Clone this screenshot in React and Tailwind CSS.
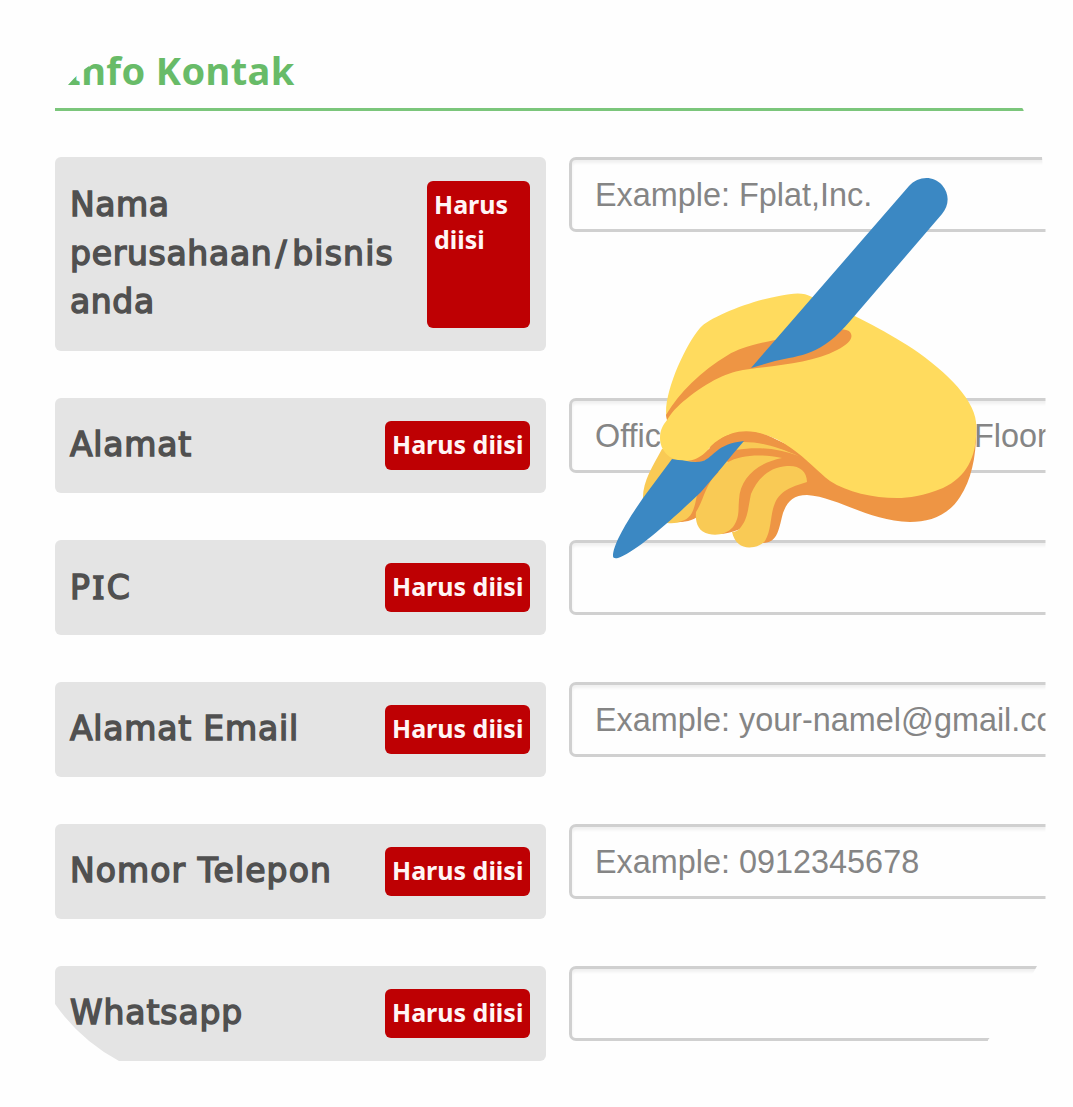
const rows = [
  {
    label: (
      <>
        Nama <span className="tracking-[0.7px]">perusahaan</span>
        <span className="ml-[3px] mr-[5px]">/</span>
        <span className="tracking-[1.2px]">bisnis</span> anda
      </>
    ),
    placeholder: "Example: Fplat,Inc.",
    tall: true,
  },
  {
    label: <span className="tracking-[0.8px]">Alamat</span>,
    placeholder: (
      <>
        Office<span className="ml-[295px]">Floor</span>
      </>
    ),
  },
  {
    label: (
      <>
        P<span className="mx-[2px] font-['Noto_Sans',sans-serif] font-medium">I</span>C
      </>
    ),
    placeholder: "",
  },
  {
    label: <span className="tracking-[0.8px]">Alamat Email</span>,
    placeholder: "Example: your-namel@gmail.com",
  },
  {
    label: <span className="tracking-[1.1px]">Nomor Telepon</span>,
    placeholder: "Example: 0912345678",
  },
  { label: <span className="tracking-[0.9px]">Whatsapp</span>, placeholder: "" },
];

function Row({ label, placeholder, tall }) {
  return (
    <div className="flex items-start gap-[23px]">
      <div
        className={`flex w-[491px] shrink-0 justify-between rounded-[6px] bg-[#e4e4e4] pr-4 pl-[15px] ${
          tall ? "h-[194px] pt-6 pb-[23px]" : "h-[95px] py-[23px]"
        }`}
      >
        <div className="w-[330px] shrink-0 font-['DejaVu_Sans',sans-serif] text-[33px] leading-[48.6px] tracking-[0.6px] text-[#505050] [-webkit-text-stroke:1.5px_#505050]">
          {label}
        </div>
        <div
          className={`shrink-0 rounded-[6px] bg-[#be0003] pl-[7px] text-[25px] font-bold text-[#fff5f5] ${
            tall ? "w-[103px] pt-[6px] leading-[35px]" : "-ml-20 w-[145px] leading-[47px] whitespace-nowrap"
          }`}
        >
          Harus diisi
        </div>
      </div>
      <div className="h-[75px] w-[520px] shrink-0 overflow-hidden rounded-[7px] border-[3px] border-[#d0d0d0] pl-[23px] font-['Liberation_Sans',sans-serif] text-[32.4px] leading-[70px] whitespace-nowrap text-[#858585] shadow-[inset_0_3px_3px_rgba(0,0,0,0.06)]">
        {placeholder}
      </div>
    </div>
  );
}

function WritingHand() {
  return (
    <svg className="absolute top-[170px] left-[600px] h-[400px] w-[390px]" viewBox="600 170 390 400">
      <path fill="#f9ca55" d="M662 449C653 466 642 482 643 500L667 523C676 524 686 522 697 514L735 450Z" />
      <path fill="#ee9544" d="M678 522C692 520 694 510 697 495L714 470L724 474C714 487 712 505 703 512C695 520 688 522 678 522Z" />
      <path fill="#ee9544" d="M700 440L745 426L800 450L976 425C977 453 972 479 960 497C948 516 929 522 910 522C868 521 838 497 807 495C793 495 787 502 783 513C779 528 778 543 763 543L755 526C742 526 734 534 718 534L708 495L728 462Z" />
      <path fill="#f9ca55" d="M728 462C739 456 759 453 782 458C757 463 740 478 739 500C738 510 740 517 733 527C727 534 717 536 709 534C698 532 695 522 696 512C702 503 705 489 712 479Z" />
      <path fill="#f9ca55" d="M787 466C767 467 756 482 751 494C748 508 748 518 741 527C738 531 735 532 732 532C735 545 744 549 754 547C759 546 762 544 765 541C772 529 770 514 775 503C781 489 795 486 807 482C807 471 799 465 787 466Z" />
      <path fill="#f9ca55" d="M742 441C764 440 780 448 799 456C779 449 759 446 736 450Z" />
      <path fill="#ffdb5e" d="M667 420C661 398 685 345 700 328C710 317 750 301 779 296C794 293 803 292 812 297C843 309 878 327 907 345C940 366 974 397 976 422C978 453 969 476 943 488C923 496 909 498 897 498C873 498 847 492 830 481C818 472 807 459 791 448C763 427 730 427 711 446C705 453 700 463 685 461C669 461 660 450 660 438C660 430 663 425 667 420Z" />
      <path fill="#ee9544" d="M685 461C704 460 707 448 718 441C743 422 773 433 800 456C776 447 763 442 743 442C715 442 713 463 697 462Z" />
      <path fill="#ee9544" d="M667 420C673 410 681 403 690 396C714 378 731 371 750 369C782 365 814 362 837 350C850 343 854 337 850 332C844 325 820 332 775 340C750 345 738 349 728 355C701 371 679 393 666 415Z" />
      <path fill="#3b88c3" d="M751 368L909 186C918 176 933 175 942 185C950 194 949 206 942 214L851 320C821 356 801 355 775 361Z" />
      <path fill="#3b88c3" d="M744 441C716 444 714 457 703 461C694 464 686 460 678 460L672 459L643 498C629 518 613 544 613 556Q613 559 618 558C635 553 675 517 701 492C716 475 730 457 744 441Z" />
    </svg>
  );
}

export default function App() {
  return (
    <div className="relative h-[1107px] w-[1073px] overflow-hidden bg-[#fefefe] font-['Noto_Sans',sans-serif]">
      <main className="h-[1107px] w-[1073px] overflow-hidden pl-[55px] [clip-path:path('M0_130L55_100L68_85Q78_73_92_64L97_0L1000_0L1000_80L1023_109L1042_157L1045.5_200L1045.5_930L1037_966Q1015_1008_988_1040L980_1107L200_1107L119_1061Q80_1040_55_1004L0_1004Z')]">
        <h1 className="h-[111px] w-[990px] border-b-[3px] border-[#7bc67b] pt-[44px] pl-[11px] text-[38px] leading-[52px] font-bold tracking-[0.4px] text-[#68bb68]">
          Info Kontak
        </h1>
        <div className="flex flex-col gap-[47px] pt-[46px]">
          {rows.map((row, i) => (
            <Row key={i} {...row} />
          ))}
        </div>
      </main>
      <WritingHand />
    </div>
  );
}
